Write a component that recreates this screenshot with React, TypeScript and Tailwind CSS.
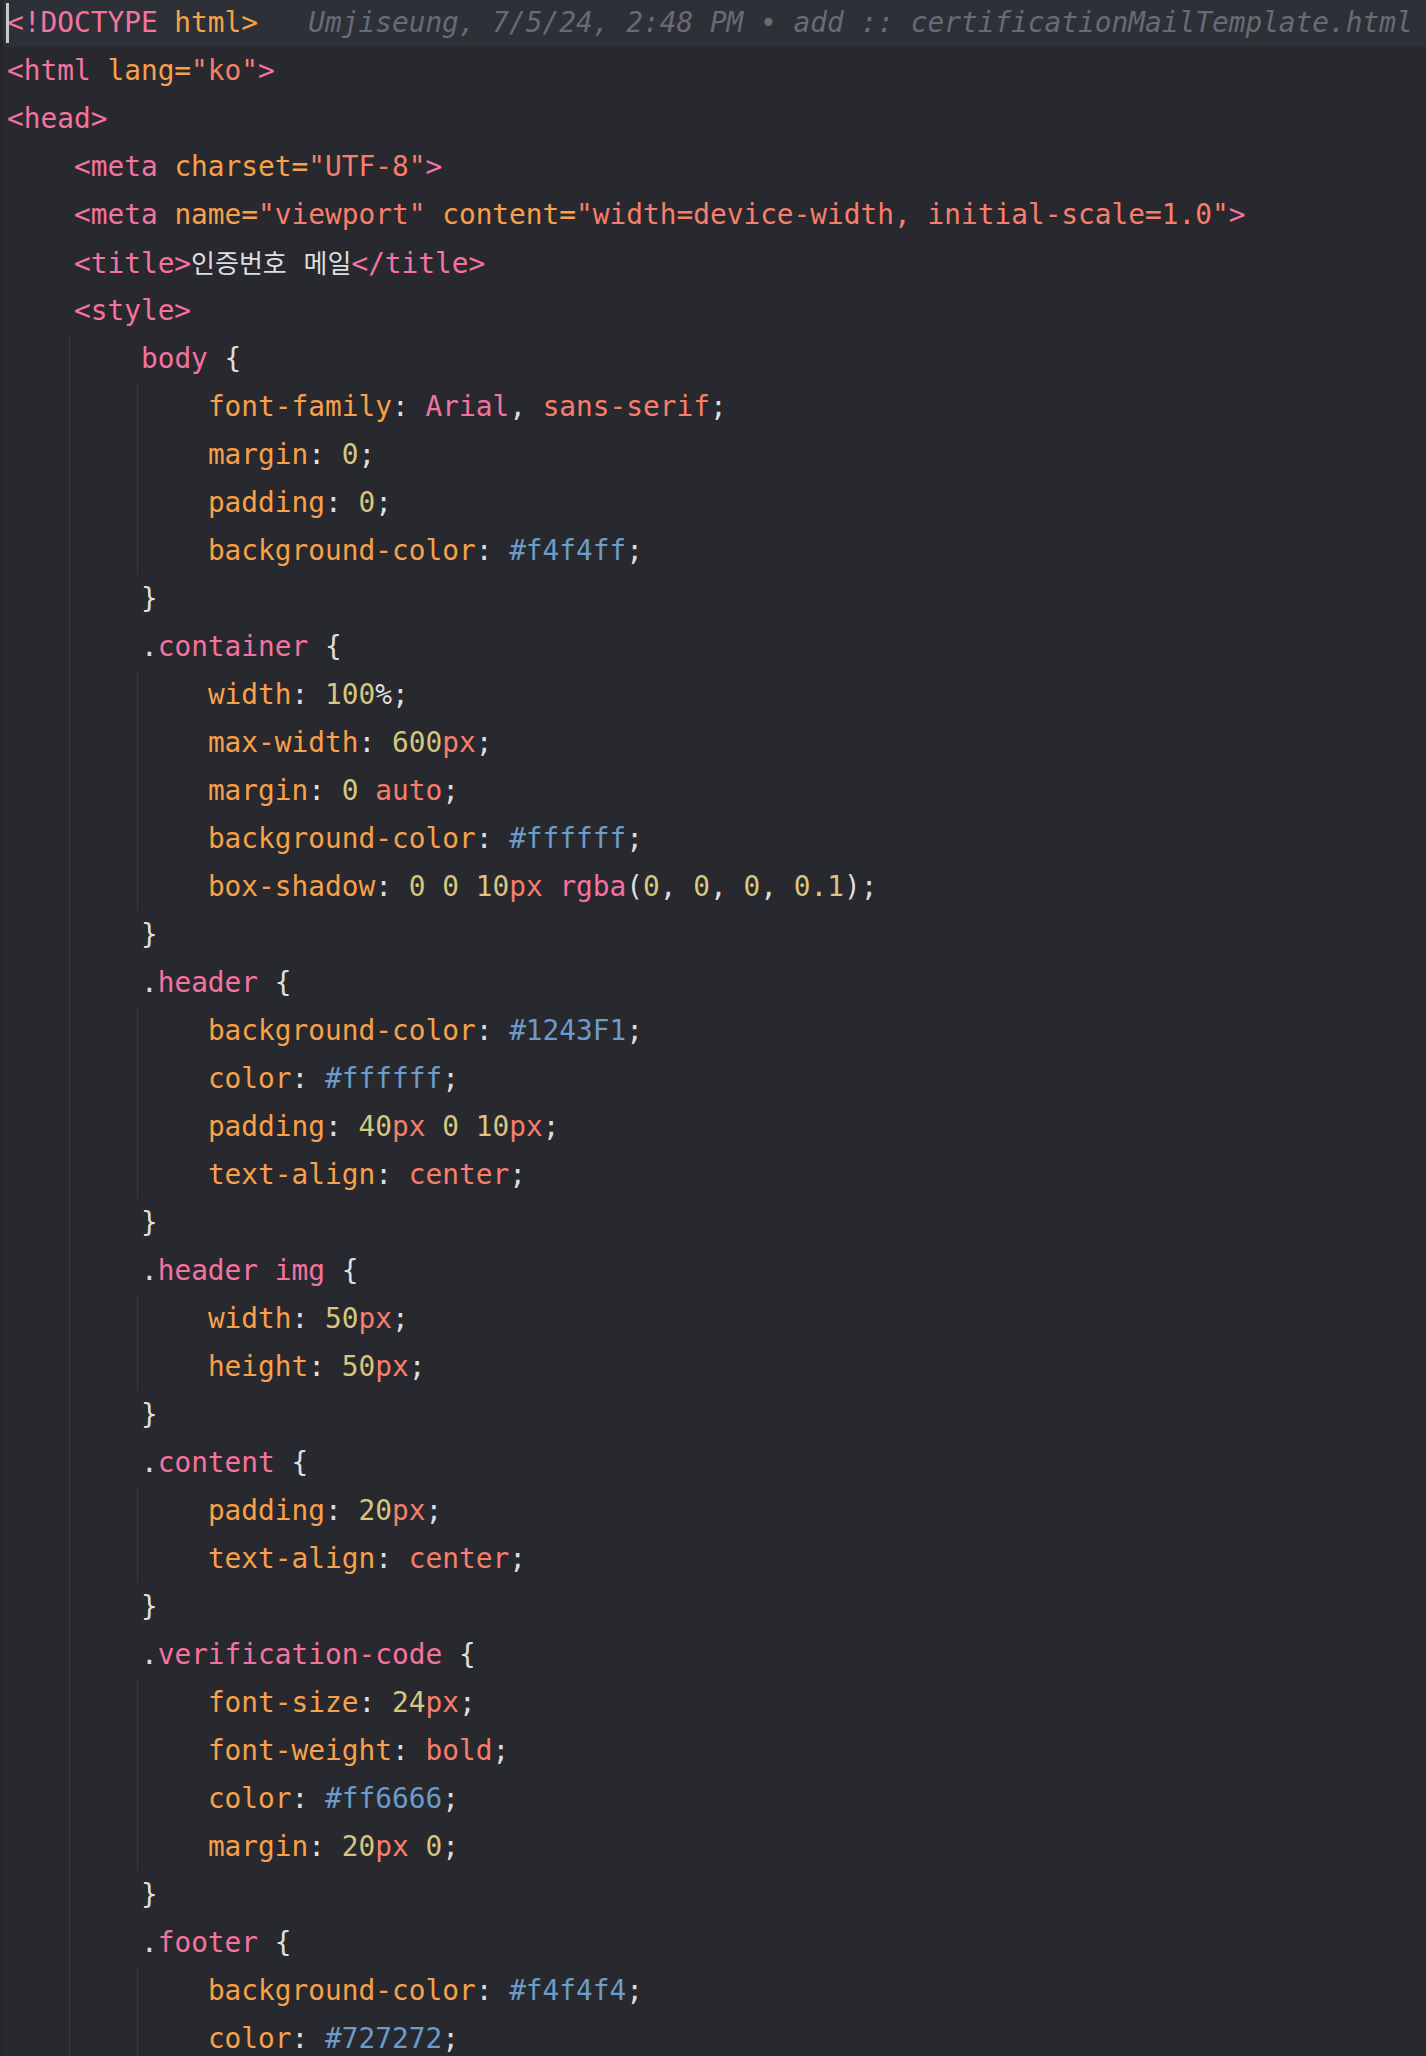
import React from "react";

type Tok = [string, string];

const P = "text-[#f5739f]";
const O = "text-[#f8a04a]";
const S = "text-[#f87e6c]";
const Y = "text-[#d7c67f]";
const B = "text-[#6b9ccb]";
const W = "text-[#dedede]";
const K = "KO";

const prop = (n: string): Tok[] => [[O, n], [W, ": "]];
const px = (n: string): Tok[] => [[Y, n], [S, "px"]];
const end: Tok = [W, ";"];
const sel = (n: string): Tok[] => [[W, "."], [P, n], [W, " {"]];
const close: Tok[] = [[W, "}"]];

type Line = { lvl: number; toks: Tok[] };

const lines: Line[] = [
  { lvl: 0, toks: [[P, "<!DOCTYPE"], [O, " html>"]] },
  { lvl: 0, toks: [[P, "<html"], [O, " lang="], [S, '"ko"'], [P, ">"]] },
  { lvl: 0, toks: [[P, "<head>"]] },
  { lvl: 1, toks: [[P, "<meta"], [O, " charset="], [S, '"UTF-8"'], [P, ">"]] },
  {
    lvl: 1,
    toks: [
      [P, "<meta"],
      [O, " name="],
      [S, '"viewport"'],
      [O, " content="],
      [S, '"width=device-width, initial-scale=1.0"'],
      [P, ">"],
    ],
  },
  { lvl: 1, toks: [[P, "<title>"], [K, "인증번호"], [W, " "], [K, "메일"], [P, "</title>"]] },
  { lvl: 1, toks: [[P, "<style>"]] },
  { lvl: 2, toks: [[P, "body"], [W, " {"]] },
  { lvl: 3, toks: [...prop("font-family"), [P, "Arial"], [W, ", "], [S, "sans-serif"], end] },
  { lvl: 3, toks: [...prop("margin"), [Y, "0"], end] },
  { lvl: 3, toks: [...prop("padding"), [Y, "0"], end] },
  { lvl: 3, toks: [...prop("background-color"), [B, "#f4f4ff"], end] },
  { lvl: 2, toks: close },
  { lvl: 2, toks: sel("container") },
  { lvl: 3, toks: [...prop("width"), [Y, "100"], [W, "%;"]] },
  { lvl: 3, toks: [...prop("max-width"), ...px("600"), end] },
  { lvl: 3, toks: [...prop("margin"), [Y, "0"], [W, " "], [S, "auto"], end] },
  { lvl: 3, toks: [...prop("background-color"), [B, "#ffffff"], end] },
  {
    lvl: 3,
    toks: [
      ...prop("box-shadow"),
      [Y, "0 0 10"],
      [S, "px"],
      [W, " "],
      [P, "rgba"],
      [W, "("],
      [Y, "0"],
      [W, ", "],
      [Y, "0"],
      [W, ", "],
      [Y, "0"],
      [W, ", "],
      [Y, "0.1"],
      [W, ");"],
    ],
  },
  { lvl: 2, toks: close },
  { lvl: 2, toks: sel("header") },
  { lvl: 3, toks: [...prop("background-color"), [B, "#1243F1"], end] },
  { lvl: 3, toks: [...prop("color"), [B, "#ffffff"], end] },
  { lvl: 3, toks: [...prop("padding"), ...px("40"), [W, " "], [Y, "0"], [W, " "], ...px("10"), end] },
  { lvl: 3, toks: [...prop("text-align"), [S, "center"], end] },
  { lvl: 2, toks: close },
  { lvl: 2, toks: sel("header img") },
  { lvl: 3, toks: [...prop("width"), ...px("50"), end] },
  { lvl: 3, toks: [...prop("height"), ...px("50"), end] },
  { lvl: 2, toks: close },
  { lvl: 2, toks: sel("content") },
  { lvl: 3, toks: [...prop("padding"), ...px("20"), end] },
  { lvl: 3, toks: [...prop("text-align"), [S, "center"], end] },
  { lvl: 2, toks: close },
  { lvl: 2, toks: sel("verification-code") },
  { lvl: 3, toks: [...prop("font-size"), ...px("24"), end] },
  { lvl: 3, toks: [...prop("font-weight"), [S, "bold"], end] },
  { lvl: 3, toks: [...prop("color"), [B, "#ff6666"], end] },
  { lvl: 3, toks: [...prop("margin"), ...px("20"), [W, " "], [Y, "0"], end] },
  { lvl: 2, toks: close },
  { lvl: 2, toks: sel("footer") },
  { lvl: 3, toks: [...prop("background-color"), [B, "#f4f4f4"], end] },
  { lvl: 3, toks: [...prop("color"), [B, "#727272"], end] },
];

function Indent({ lvl }: { lvl: number }) {
  if (lvl === 0) return null;
  if (lvl === 1) return <span className="w-[66.96px] shrink-0" />;
  if (lvl === 2)
    return (
      <>
        <span className="w-[62px] shrink-0" />
        <span className="w-[71.92px] shrink-0 self-stretch border-l border-[#393a40]" />
      </>
    );
  return (
    <>
      <span className="w-[62px] shrink-0" />
      <span className="w-[68px] shrink-0 self-stretch border-l border-[#393a40]" />
      <span className="w-[70.88px] shrink-0 self-stretch border-l border-[#393a40]" />
    </>
  );
}

function Tokens({ toks }: { toks: Tok[] }) {
  return (
    <span className="whitespace-pre">
      {toks.map(([c, s], i) =>
        c === K ? (
          <span
            key={i}
            className="text-[#dedede] text-[26px] [font-family:'Noto_Sans_CJK_KR',sans-serif]"
          >
            {s}
          </span>
        ) : (
          <span key={i} className={c}>
            {s}
          </span>
        )
      )}
    </span>
  );
}

export default function App() {
  return (
    <div className="h-[2056px] w-full overflow-hidden bg-[#28292e] [font-family:'DejaVu_Sans_Mono','Liberation_Mono',monospace] text-[27.8px] leading-[48px] border-l-[3px] border-[#25262a]">
      <div className="mt-[-1px]">
        {lines.map((ln, i) => (
          <div
            key={i}
            className={
              "relative flex h-[48px] items-center pl-[4px] " +
              (i === 0 ? "bg-[#2e3038]" : "")
            }
          >
            {i === 0 && (
              <span className="absolute left-[3px] top-[4px] h-[40px] w-[3px] bg-[#c9c9cc]" />
            )}
            <Indent lvl={ln.lvl} />
            <Tokens toks={ln.toks} />
            {i === 0 && (
              <span className="ml-[50.2px] whitespace-pre italic text-[#686b74]">
                Umjiseung, 7/5/24, 2:48 PM • add :: certificationMailTemplate.html
              </span>
            )}
          </div>
        ))}
      </div>
    </div>
  );
}
